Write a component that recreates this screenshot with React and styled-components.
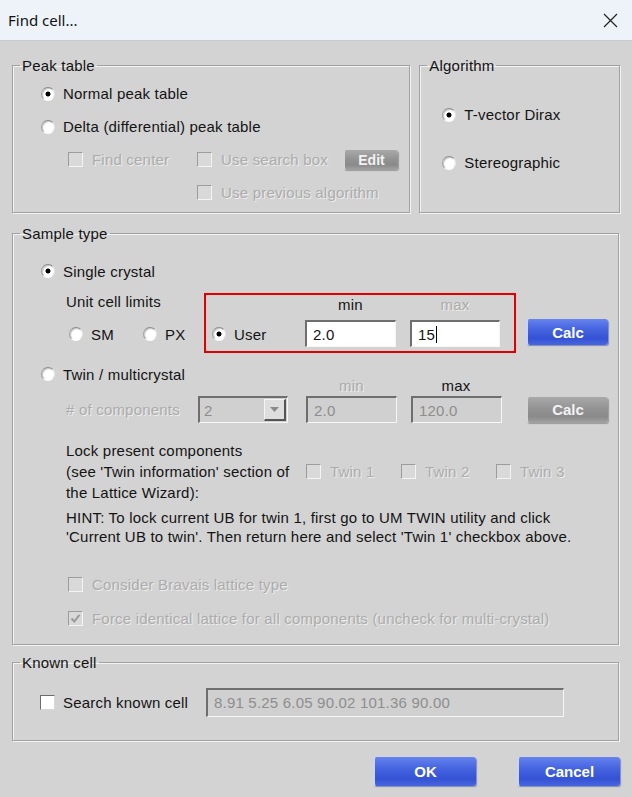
import styled, { createGlobalStyle } from 'styled-components';

const GlobalStyle = createGlobalStyle`
  html, body {
    margin: 0;
    padding: 0;
  }
  body {
    font-family: 'Liberation Sans', Arial, sans-serif;
    font-size: 15px;
    letter-spacing: 0.2px;
    color: #141414;
    background: #d3d3d3;
  }
`;

const Window = styled.div`
  width: 632px;
  height: 797px;
  background: #d3d3d3;
  display: flex;
  flex-direction: column;
  overflow: hidden;
`;

const TitleBar = styled.div`
  height: 40px;
  flex: none;
  background: #eef3f9;
  border-bottom: 1px solid #c8cbd0;
  display: flex;
  align-items: center;
  justify-content: space-between;
  padding: 0 14px 0 8px;
  font-family: 'Noto Sans', 'Open Sans', sans-serif;
  font-size: 15px;
  letter-spacing: 0;
  color: #111;
`;

const Body = styled.div`
  padding: 16px 12px 0 12px;
  display: flex;
  flex-direction: column;
`;

const TopRow = styled.div`
  display: flex;
  gap: 9px;
`;

const Group = styled.fieldset`
  margin: ${(p) => p.$mt || 0}px 0 0 0;
  padding: 0;
  width: ${(p) => p.$w}px;
  box-sizing: border-box;
  min-width: 0;
  border: 1px solid #a2a2a2;
  box-shadow: inset 1px 1px 0 #f2f2f2, 1px 1px 0 #f2f2f2;
`;

const Legend = styled.legend`
  margin-left: 7px;
  padding: 0 2px;
  line-height: 17px;
  color: #141414;
`;

const GroupBody = styled.div`
  padding: ${(p) => p.$pad};
`;

const Stack = styled.div`
  display: flex;
  flex-direction: column;
  gap: ${(p) => p.$gap || 0}px;
  width: ${(p) => (p.$w ? `${p.$w}px` : 'auto')};
  flex: none;
`;

const Choice = styled.label`
  display: flex;
  align-items: center;
  gap: ${(p) => p.$gap || 8}px;
  height: ${(p) => p.$h || 26}px;
  width: ${(p) => (p.$w ? `${p.$w}px` : 'auto')};
  margin-top: ${(p) => p.$mt || 0}px;
  flex: none;
  white-space: nowrap;
  color: ${(p) => (p.$off ? '#acacac' : '#141414')};
  text-shadow: ${(p) => (p.$off ? '1px 1px 0 #ededed' : 'none')};
`;

const RadioCircle = styled.span`
  width: 14px;
  height: 14px;
  flex: none;
  box-sizing: border-box;
  border-radius: 50%;
  border: 1px solid;
  border-color: #8c8c8c #e6e6e6 #fdfdfd #a0a0a0;
  background: ${(p) =>
    p.$on ? 'radial-gradient(circle, #000 0 2.2px, #fff 2.8px)' : '#fff'};
  box-shadow: inset 1px 1px 1px #c4c4c4;
`;

const Box = styled.span`
  width: 15px;
  height: 15px;
  flex: none;
  box-sizing: border-box;
  border: 1px solid;
  border-color: ${(p) =>
    p.$off ? '#9c9c9c #f4f4f4 #f4f4f4 #9c9c9c' : '#6c6c6c #d8d8d8 #d8d8d8 #6c6c6c'};
  background: ${(p) => (p.$off ? '#d9d9d9' : '#fff')};
  display: flex;
  align-items: center;
  justify-content: center;
`;

function Radio({ on, children, ...rest }) {
  return (
    <Choice {...rest}>
      <RadioCircle $on={on} />
      <span>{children}</span>
    </Choice>
  );
}

function Check({ on, off, children, ...rest }) {
  return (
    <Choice $gap={9} $off={off} {...rest}>
      <Box $off={off}>
        {on && (
          <svg width="11" height="11" viewBox="0 0 11 11">
            <path d="M1.5 5.5 L4.3 8.5 L9.5 1.8" fill="none" stroke="#9a9a9a" strokeWidth="2" />
          </svg>
        )}
      </Box>
      <span>{children}</span>
    </Choice>
  );
}

const Row = styled.div`
  display: flex;
  align-items: ${(p) => p.$align || 'center'};
  height: ${(p) => (p.$h ? `${p.$h}px` : 'auto')};
  margin-top: ${(p) => p.$mt || 0}px;
  padding-left: ${(p) => p.$pl || 0}px;
`;

const Button = styled.div`
  width: ${(p) => p.$w}px;
  height: ${(p) => p.$h}px;
  margin-left: ${(p) => p.$ml || 0}px;
  margin-top: ${(p) => p.$mt || 0}px;
  flex: none;
  box-sizing: border-box;
  display: flex;
  align-items: center;
  justify-content: center;
  border-radius: 3px;
  font-weight: bold;
  letter-spacing: 0;
  font-size: ${(p) => p.$fs || 15}px;
  color: ${(p) => (p.$gray ? '#f2f2f2' : '#fff')};
  border-left: 2px solid ${(p) => (p.$gray ? '#d4d4d4' : '#c9d3fb')};
  background: ${(p) =>
    p.$gray
      ? 'linear-gradient(to bottom, #a9a9a9 0%, #939393 45%, #8a8a8a 75%, #a3a3a3 100%)'
      : 'linear-gradient(to bottom, #6683ee 0%, #4564df 40%, #3452d4 75%, #4966de 100%)'};
  box-shadow: 1px 1px 1px ${(p) => (p.$gray ? '#9a9a9a' : '#7f8bb8')};
`;

const Field = styled.div`
  width: ${(p) => p.$w}px;
  height: ${(p) => p.$h || 27}px;
  margin-top: ${(p) => p.$mt || 0}px;
  margin-left: ${(p) => p.$ml || 0}px;
  flex: none;
  box-sizing: border-box;
  border-top: 2px solid #6e6e6e;
  border-left: 2px solid #6e6e6e;
  border-right: 1px solid #f6f6f6;
  border-bottom: 1px solid #f6f6f6;
  background: ${(p) => (p.$off ? '#d0d0d0' : '#fff')};
  color: ${(p) => (p.$off ? '#8e8e8e' : '#141414')};
  display: flex;
  align-items: center;
  padding-left: 6px;
  white-space: nowrap;
`;

const Caret = styled.span`
  display: inline-block;
  width: 1px;
  height: 17px;
  background: #000;
  margin-left: 1px;
`;

const Select = styled.div`
  width: 90px;
  height: 27px;
  flex: none;
  box-sizing: border-box;
  border-top: 2px solid #6e6e6e;
  border-left: 2px solid #6e6e6e;
  border-right: 1px solid #f6f6f6;
  border-bottom: 1px solid #f6f6f6;
  background: #d0d0d0;
  display: flex;
  align-items: stretch;
  color: #8e8e8e;
`;

const SelectValue = styled.div`
  flex: 1;
  display: flex;
  align-items: center;
  padding-left: 4px;
`;

const SelectArrow = styled.div`
  width: 22px;
  box-sizing: border-box;
  margin: 1px 1px 1px 0;
  background: #dedede;
  border-top: 1px solid #f4f4f4;
  border-left: 1px solid #f4f4f4;
  border-right: 2px solid #555;
  border-bottom: 2px solid #555;
  display: flex;
  align-items: center;
  justify-content: center;
`;

const Label = styled.div`
  width: ${(p) => (p.$w ? `${p.$w}px` : 'auto')};
  margin-left: ${(p) => p.$ml || 0}px;
  margin-top: ${(p) => p.$mt || 0}px;
  padding-left: ${(p) => p.$pl || 0}px;
  box-sizing: border-box;
  flex: none;
  line-height: ${(p) => p.$lh || 18}px;
  text-align: ${(p) => p.$align || 'left'};
  align-self: ${(p) => p.$self || 'auto'};
  white-space: nowrap;
  color: ${(p) => (p.$off ? '#acacac' : '#141414')};
  text-shadow: ${(p) => (p.$off ? '1px 1px 0 #ededed' : 'none')};
`;

const RedBox = styled.div`
  width: 312px;
  height: 60px;
  flex: none;
  box-sizing: border-box;
  border: 2px solid #e10000;
  display: flex;
  align-items: flex-start;
  padding-left: 6px;
`;

const FieldCol = styled.div`
  display: flex;
  flex-direction: column;
  align-items: center;
  margin-left: ${(p) => p.$ml || 0}px;
`;

const ButtonBar = styled.div`
  display: flex;
  justify-content: flex-end;
  gap: 41px;
  margin-top: 16px;
`;

function CloseIcon() {
  return (
    <svg width="15" height="15" viewBox="0 0 15 15">
      <path d="M1 1 L14 14 M14 1 L1 14" stroke="#222" strokeWidth="1.2" fill="none" />
    </svg>
  );
}

export default function App() {
  return (
    <>
      <GlobalStyle />
      <Window>
        <TitleBar>
          <span>Find cell...</span>
          <CloseIcon />
        </TitleBar>

        <Body>
          <TopRow>
            <Group $w={399}>
              <Legend>Peak table</Legend>
              <GroupBody $pad="3px 0 3px 28px">
                <Radio on $h={33}>Normal peak table</Radio>
                <Radio $h={33}>Delta (differential) peak table</Radio>
                <Row $h={33} $pl={27}>
                  <Check off $w={129}>Find center</Check>
                  <Check off $w={146}>Use search box</Check>
                  <Button $gray $w={55} $h={20} $fs={14}>Edit</Button>
                </Row>
                <Row $h={33} $pl={156}>
                  <Check off>Use previous algorithm</Check>
                </Row>
              </GroupBody>
            </Group>

            <Group $w={201}>
              <Legend>Algorithm</Legend>
              <GroupBody $pad="24px 0 0 22px">
                <Stack $gap={15}>
                  <Radio on $h={33}>T-vector Dirax</Radio>
                  <Radio $h={33}>Stereographic</Radio>
                </Stack>
              </GroupBody>
            </Group>
          </TopRow>

          <Group $w={607} $mt={12}>
            <Legend>Sample type</Legend>
            <GroupBody $pad="16px 0 13px 28px">
              <Radio on>Single crystal</Radio>

              <Row $align="flex-start" $mt={9}>
                <Stack $w={163}>
                  <Label $pl={25}>Unit cell limits</Label>
                  <Row $h={26} $mt={10} $pl={28}>
                    <Radio $w={74}>SM</Radio>
                    <Radio>PX</Radio>
                  </Row>
                </Stack>
                <RedBox>
                  <Radio on $w={93} $mt={26}>User</Radio>
                  <FieldCol>
                    <Label $mt={1}>min</Label>
                    <Field $w={91} $mt={6}>2.0</Field>
                  </FieldCol>
                  <FieldCol $ml={14}>
                    <Label $mt={1} $off>max</Label>
                    <Field $w={90} $mt={6}>
                      15<Caret />
                    </Field>
                  </FieldCol>
                </RedBox>
                <Button $w={82} $h={26} $ml={10} $mt={26}>Calc</Button>
              </Row>

              <Row $h={34} $mt={8} $align="flex-start">
                <Radio $w={265}>Twin / multicrystal</Radio>
                <Label $w={91} $align="center" $self="flex-end" $off>min</Label>
                <Label $w={90} $ml={14} $align="center" $self="flex-end">max</Label>
              </Row>

              <Row $h={29}>
                <Label $w={157} $pl={25} $off>
                  # of components
                </Label>
                <Select>
                  <SelectValue>2</SelectValue>
                  <SelectArrow>
                    <svg width="9" height="5" viewBox="0 0 9 5">
                      <path d="M0 0 H9 L4.5 5 Z" fill="#8a8a8a" />
                    </svg>
                  </SelectArrow>
                </Select>
                <Field $w={91} $ml={18} $off>2.0</Field>
                <Field $w={91} $ml={14} $off>120.0</Field>
                <Button $gray $w={82} $h={26} $ml={24}>Calc</Button>
              </Row>

              <Row $mt={16}>
                <Label $w={265} $pl={25} $lh={21}>
                  Lock present components
                  <br />
                  (see 'Twin information' section of
                  <br />
                  the Lattice Wizard):
                </Label>
                <Check off $w={95}>Twin 1</Check>
                <Check off $w={95}>Twin 2</Check>
                <Check off>Twin 3</Check>
              </Row>

              <Label $mt={5} $pl={25} $lh={19}>
                HINT: To lock current UB for twin 1, first go to UM TWIN utility and click
                <br />
                'Current UB to twin'. Then return here and select 'Twin 1' checkbox above.
              </Label>

              <Row $mt={25} $pl={27}>
                <Check off>Consider Bravais lattice type</Check>
              </Row>
              <Row $mt={8} $pl={27}>
                <Check off on>
                  Force identical lattice for all components (uncheck for multi-crystal)
                </Check>
              </Row>
            </GroupBody>
          </Group>

          <Group $w={607} $mt={9}>
            <Legend>Known cell</Legend>
            <GroupBody $pad="16px 0 23px 27px">
              <Row $h={30}>
                <Check $w={166} $gap={8}>Search known cell</Check>
                <Field $w={358} $h={29} $off>8.91 5.25 6.05 90.02 101.36 90.00</Field>
              </Row>
            </GroupBody>
          </Group>

          <ButtonBar>
            <Button $w={103} $h={29}>OK</Button>
            <Button $w={103} $h={29}>Cancel</Button>
          </ButtonBar>
        </Body>
      </Window>
    </>
  );
}
